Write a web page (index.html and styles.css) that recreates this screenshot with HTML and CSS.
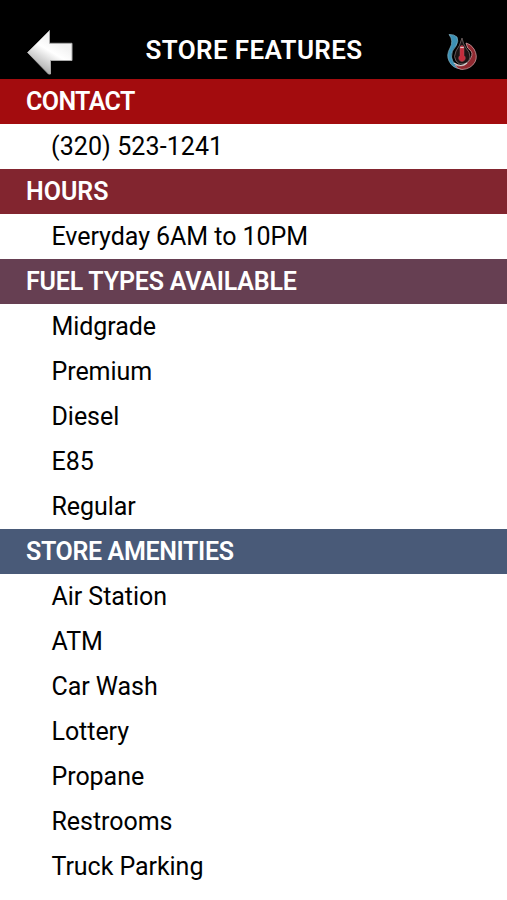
FILE: index.html
```html
<!DOCTYPE html>
<html lang="en">
<head>
<meta charset="utf-8">
<title>Store Features</title>
<link rel="stylesheet" href="styles.css">
</head>
<body>
<header class="bar">
  <svg class="back" viewBox="0 0 50 50" width="50" height="50">
    <defs><linearGradient id="g" x1=".25" y1=".9" x2=".65" y2=".25"><stop offset="0" stop-color="#aaa"/><stop offset=".65" stop-color="#fff"/><stop offset="1" stop-color="#f2f2f2"/></linearGradient></defs>
    <path d="M3.500 26.500 25.500 4.500V17.300H48V34.500H26.500V48H24.500Z" fill="url(#g)" stroke="#aaa" stroke-width="1" stroke-linejoin="round"/>
  </svg>
  <h1 class="title">STORE FEATURES</h1>
  <svg class="logo" viewBox="0 0 34 40" width="34" height="40">
    <path d="M4 2.500Q9 2 12 5 14 9 11 14 6 19 6.500 25 8 33 16 37 7 36 4 29 1 23 5 16 9 9 4 2.500Z" fill="#3c91b5" stroke="#92bccb" stroke-width=".6"/>
    <path d="M21 11Q26 12 29 17 33 24 30 30 26 37 17 37.500 12 37 10 33 18 36 23 30 29 23 26 19 22 17 21 11Z" fill="#8f2930" stroke="#c99b9e" stroke-width=".8"/>
    <path d="M17 6Q15 14 11 19 8 25 11 29 14 33 18 32 24 31 25 25 25 20 21 16 18 12 17 6Z" fill="#1c1415" stroke="#77696a" stroke-width=".8"/>
    <path d="M15 15.500a2 2 0 0 1 4 0v8a3.300 3.300 0 1 1-4 0z" fill="#c52c3c" stroke="#a85860" stroke-width=".5"/>
    <path d="M15.200 15.500h3.600" stroke="#e0c5c7" stroke-width="1.200"/>
    <path d="M9 31q7 5 13 0" fill="none" stroke="#d5d0d0" stroke-width="1.200"/>
  </svg>
</header>
<main>
  <section><h2 class="head contact">CONTACT</h2><ul class="list"><li class="phone">(320) 523-1241</li></ul></section>
  <section><h2 class="head hours">HOURS</h2><ul class="list"><li>Everyday 6AM to 10PM</li></ul></section>
  <section><h2 class="head fuel">FUEL TYPES AVAILABLE</h2><ul class="list"><li>Midgrade</li><li>Premium</li><li>Diesel</li><li>E85</li><li>Regular</li></ul></section>
  <section><h2 class="head store">STORE AMENITIES</h2><ul class="list"><li>Air Station</li><li>ATM</li><li>Car Wash</li><li>Lottery</li><li>Propane</li><li>Restrooms</li><li>Truck Parking</li></ul></section>
</main>
</body>
</html>
```
FILE: styles.css
```css
* { box-sizing: border-box; margin: 0; padding: 0; }
body { width: 507px; height: 900px; overflow: hidden; background: #fff; color: #000; font-family: Roboto, sans-serif; }
.bar { height: 79px; padding: 26px 28px 0 24px; display: grid; grid-template-columns: 50px 1fr 34px; background: #000; color: #fff; }
.title { padding-left: 71.5px; font-size: 26px; line-height: 48px; font-weight: 600; letter-spacing: 0.36px; white-space: nowrap; }
.logo { margin-top: 6px; }
.head { height: 45px; padding-left: 26px; font-size: 25px; line-height: 45px; font-weight: 600; color: #fff; }
.contact { background: #a30c0e; letter-spacing: -0.6px; }
.hours { background: #82252f; }
.fuel { background: #663f52; letter-spacing: -0.2px; }
.store { background: #495a78; letter-spacing: -0.35px; }
.list { list-style: none; }
.list li { height: 45px; padding-left: 51.5px; font-size: 25px; line-height: 45px; letter-spacing: -0.05px; }
.list .phone { padding-left: 51px; letter-spacing: 0.1px; }
```
